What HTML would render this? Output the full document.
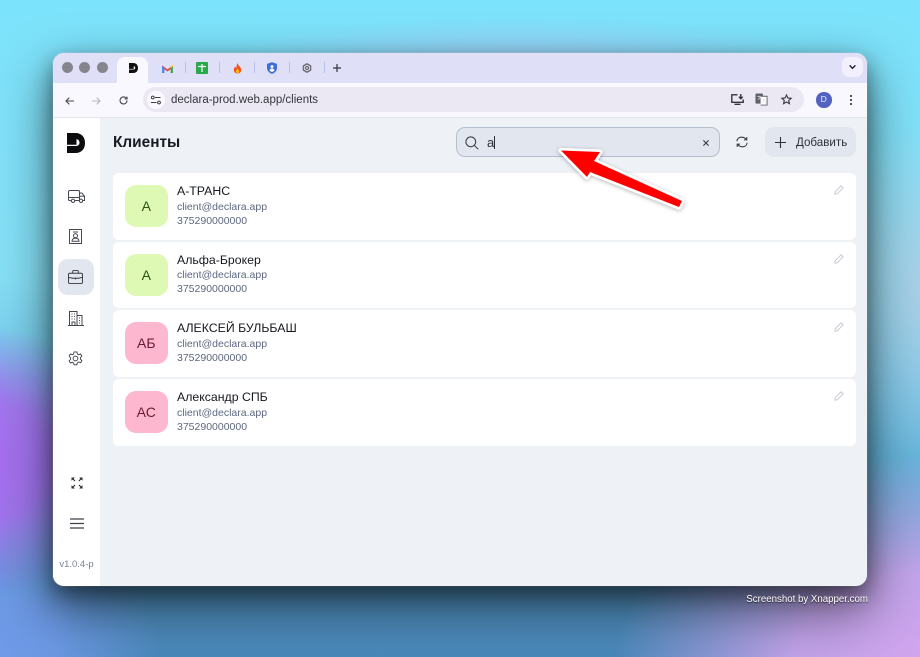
<!DOCTYPE html>
<html lang="ru"><head><meta charset="utf-8"><title>Клиенты</title>
<style>
*{box-sizing:border-box}
html,body{margin:0;padding:0}
body{width:920px;height:657px;overflow:hidden;position:relative;font-family:"Liberation Sans","Noto Sans CJK SC",sans-serif;
background:
radial-gradient(ellipse 300px 45px at 520px 62px,rgba(170,205,250,.75) 0%,rgba(170,205,250,0) 100%),
radial-gradient(ellipse 110px 170px at 930px 290px,rgba(180,205,228,.85) 0%,rgba(180,205,228,0) 100%),
radial-gradient(ellipse 140px 135px at -15px 460px,#a86df0 0%,rgba(168,109,240,.88) 45%,rgba(168,109,240,0) 100%),
radial-gradient(ellipse 320px 210px at 935px 665px,#d4a6f0 0%,rgba(212,166,240,.85) 45%,rgba(212,166,240,0) 100%),
radial-gradient(ellipse 170px 110px at -10px 640px,#6f9ae8 0%,rgba(111,154,232,.9) 40%,rgba(111,154,232,0) 100%),
linear-gradient(180deg,#7ce3fc 0%,#86e0f6 42%,#72c6e8 58%,#4a88bb 100%);}
.abs{position:absolute}
.win{position:absolute;left:53px;top:53px;width:814px;height:533px;border-radius:11px;overflow:hidden;background:#eef1f6;box-shadow:0 8px 20px rgba(0,0,0,.42),0 22px 50px 4px rgba(0,0,0,.5),0 0 0 1px rgba(255,255,255,.22)}
.strip{position:absolute;left:0;top:0;width:814px;height:30px;background:#e0dff8}
.dot{position:absolute;top:9px;width:11px;height:11px;border-radius:50%;background:#85858d}
.tab{position:absolute;left:64px;top:4px;width:31px;height:26px;background:#faf8ff;border-radius:8px 8px 0 0}
.sep{position:absolute;top:9px;width:1px;height:11px;background:#b9c2ee}
.bar{position:absolute;left:0;top:30px;width:814px;height:35px;background:#faf8ff;border-bottom:1px solid #e4e3ea}
.url{position:absolute;left:90px;top:4px;width:661px;height:25px;border-radius:13px;background:#ece8f3}
.urltxt{position:absolute;left:28px;top:6px;font-size:11.5px;color:#33363d;line-height:14px}
.side{position:absolute;left:0;top:65px;width:47px;height:468px;background:#fff}
.active{position:absolute;left:5px;top:141px;width:36px;height:36px;border-radius:10px;background:#e2e6ee}
.ver{position:absolute;left:0;width:47px;text-align:center;font-size:9.5px;color:#7a8290;line-height:12px}
.h1{position:absolute;left:60px;top:80px;font-size:15.4px;font-weight:700;color:#181c25;line-height:19px}
.search{position:absolute;left:403px;top:74px;width:264px;height:30px;border:1px solid #b6c0cc;border-radius:9px;background:#e2e6ee}
.search .v{position:absolute;left:30px;top:7px;font-size:13px;color:#2a2f38;line-height:15px}
.caret{position:absolute;left:37px;top:8px;width:1px;height:13px;background:#2a2f38}
.add{position:absolute;left:712px;top:74px;width:91px;height:30px;border-radius:9px;background:#e2e6ee;font-size:11.6px;color:#2c313a}
.add span{position:absolute;left:31px;top:8.500px;line-height:14px}
.card{position:absolute;left:60px;width:743px;height:66.5px;background:#fff;border-radius:6px}
.av{position:absolute;left:12px;top:12px;width:42.5px;height:42px;border-radius:11px;display:flex;align-items:center;justify-content:center;font-size:14px;line-height:1}
.g{background:#def9b4;color:#2f5213}
.p{background:#fdb8cf;color:#6a1b30}
.n{position:absolute;left:64px;top:10px;font-size:12.3px;color:#15181f;line-height:16px;white-space:nowrap}
.m{position:absolute;left:64px;font-size:10.5px;color:#5d6880;line-height:13px;white-space:nowrap}
.m1{top:27.500px}.m2{top:41.500px}
.pen{position:absolute;left:721px;top:12px}
.wm{position:absolute;right:52px;top:594px;font-size:9.7px;color:#fff;line-height:12px;text-shadow:0 1px 1px rgba(0,0,0,.7)}
svg{display:block;position:absolute;overflow:visible}
</style></head><body>
<div class="win">
  <div class="strip">
    <div class="dot" style="left:9px"></div><div class="dot" style="left:26px"></div><div class="dot" style="left:44px"></div>
    <div class="tab"></div>
    <svg style="left:76px;top:10px" width="9" height="10" viewBox="0 0 18 20"><path fill="#111" d="M0 0H8.500C14.500 0 18 4 18 10S14.500 20 8.500 20H0V13H8.500C10.800 13 12.500 11.800 12.500 9.700 12.500 7.500 11 6.300 9.500 6.300V11.800H0z"/></svg>
    <svg style="left:109px;top:11px" width="11" height="9" viewBox="0 0 12 10"><path fill="#e8453c" d="M0 1.500 6 6l6-4.500V4L6 8.300 0 4z"/><path fill="#4285f4" d="M0 2v8h2.500V4z"/><path fill="#34a853" d="M12 2v8H9.500V4z"/><path fill="#f9bb2d" d="M9.500 3 12 1v2L9.500 5z"/></svg>
    <svg style="left:143px;top:9px" width="12" height="12" viewBox="0 0 12 12"><rect width="12" height="12" rx="1" fill="#2ba84a"/><path d="M2 4.500h8M6 2v8" stroke="#fff" stroke-width="1.200"/></svg>
    <svg style="left:180px;top:10px" width="9" height="11" viewBox="0 0 11 13"><path fill="#f4511e" d="M5.500 0C6 3 10 4.500 10 8.200c0 2.700-2 4.500-4.500 4.500S1 10.900 1 8.200C1 6.300 2 5 3 4c.2 1 .6 1.500 1.200 1.800C4.400 4 4.500 2 5.500 0z"/><path fill="#fbbc04" d="M5.500 6.500c.6 1.300 2 2 2 3.700 0 1.300-1 2.400-2 2.400s-2-1.100-2-2.400c0-1.700 1.500-2.400 2-3.700z"/></svg>
    <svg style="left:214px;top:9px" width="10" height="12" viewBox="0 0 11 13"><path fill="#3f6fd8" d="M5.500 0 11 2v4.500c0 3-2.300 5.400-5.500 6.500C2.300 11.900 0 9.500 0 6.500V2z"/><circle cx="5.500" cy="5" r="1.600" fill="#fff"/><path fill="#fff" d="M2.800 9.200c.4-1.500 1.500-2.200 2.700-2.200s2.300.7 2.700 2.200c-.8.800-1.700 1.300-2.700 1.600-1-.3-1.900-.8-2.700-1.600z"/></svg>
    <svg style="left:249px;top:10px" width="10" height="10" viewBox="0 0 12 12"><path fill="none" stroke="#6c6c74" stroke-width="1.700" d="M6 1l4.300 2.500v5L6 11 1.700 8.500v-5z"/><circle cx="6" cy="6" r="1.800" fill="none" stroke="#6c6c74" stroke-width="1.400"/></svg>
    <div class="sep" style="left:132px"></div><div class="sep" style="left:166px"></div><div class="sep" style="left:201px"></div><div class="sep" style="left:236px"></div><div class="sep" style="left:271px"></div>
    <svg style="left:280px;top:11px" width="8" height="8" viewBox="0 0 8 8"><path d="M4 0v8M0 4h8" stroke="#33353b" stroke-width="1.200" fill="none"/></svg>
    <div class="abs" style="left:789px;top:4px;width:21px;height:20px;border-radius:7px;background:#f2f0fc"></div>
    <svg style="left:796px;top:12px" width="7" height="4" viewBox="0 0 7 4"><path d="M.6.4 3.500 3.300 6.400.4" stroke="#22242a" stroke-width="1.400" fill="none"/></svg>
  </div>
  <div class="bar">
    <svg style="left:12px;top:14px" width="9" height="8" viewBox="0 0 9 8"><path d="M9 4H1M4.300.6 1 4l3.300 3.400" stroke="#45474d" stroke-width="1.100" fill="none"/></svg>
    <svg style="left:39px;top:14px" width="9" height="8" viewBox="0 0 9 8"><path d="M0 4h8M4.700.6 8 4 4.700 7.400" stroke="#b5b4bc" stroke-width="1.100" fill="none"/></svg>
    <svg style="left:66px;top:13px" width="9" height="9" viewBox="0 0 9 9"><path d="M8 4.500a3.500 3.500 0 1 1-1-2.500L8 3M8 .6V3H5.600" stroke="#45474d" stroke-width="1.100" fill="none"/></svg>
    <div class="url">
      <div class="abs" style="left:4px;top:4px;width:18px;height:18px;border-radius:50%;background:#fbf9ff"></div>
      <svg style="left:7px;top:8px" width="12" height="10" viewBox="0 0 12 10"><circle cx="2.800" cy="2.500" r="1.400" fill="none" stroke="#3f4147"/><path d="M5 2.500h5.500M1 7.500h5.500" stroke="#3f4147" fill="none"/><circle cx="9" cy="7.500" r="1.400" fill="none" stroke="#3f4147"/></svg>
      <div class="urltxt">declara-prod.web.app/clients</div>
      <svg style="left:588px;top:7px" width="13" height="11" viewBox="0 0 13 11"><path d="M6.500.8H.8v7.500h11.400V5.500M3.500 10.300h6" stroke="#34363c" stroke-width="1.400" fill="none"/><path d="M9.800 0v4.500M7.900 2.800l1.900 1.900 1.900-1.900" stroke="#34363c" stroke-width="1.400" fill="none"/></svg>
      <svg style="left:612px;top:6px" width="13" height="13" viewBox="0 0 14 14"><rect x="0.500" y="0.500" width="8" height="11" rx="1" fill="#5f6168"/><path d="M6 3.500h7v9.500H6" fill="#fff" stroke="#5f6168"/><path d="M2.500 4h4M4.500 3v1M3 7c1.500-.5 2.500-1.500 3-3M8 10.500l1.800-4 1.800 4" stroke="#ddd" stroke-width=".8" fill="none"/></svg>
      <svg style="left:638px;top:7px" width="11" height="11" viewBox="0 0 12 12"><path d="M6 1l1.500 3.300 3.600.4-2.700 2.400.8 3.500L6 8.800l-3.200 1.800.8-3.500L.9 4.700l3.600-.4z" stroke="#34363c" stroke-width="1.200" fill="none"/></svg>
    </div>
    <div class="abs" style="left:763px;top:9px;width:15.500px;height:15.500px;border-radius:50%;background:#5463bf;color:#e9ecff;font-size:8.500px;line-height:15.500px;text-align:center">D</div>
    <svg style="left:796px;top:11px" width="4" height="12" viewBox="0 0 4 12"><circle cx="2" cy="2" r="1.100" fill="#45474d"/><circle cx="2" cy="6" r="1.100" fill="#45474d"/><circle cx="2" cy="10" r="1.100" fill="#45474d"/></svg>
  </div>
  <div class="side">
    <svg style="left:14px;top:15px" width="18" height="20" viewBox="0 0 18 20"><path fill="#0c0c0e" d="M0 0H8.500C14.500 0 18 4 18 10S14.500 20 8.500 20H0V13H8.500C10.800 13 12.500 11.800 12.500 9.700 12.500 7.500 11 6.300 9.500 6.300V11.800H0z"/></svg>
    <svg style="left:15px;top:72px" width="17" height="13" viewBox="0 0 17 13"><path d="M3 10.500H1.500a1 1 0 0 1-1-1V1.500a1 1 0 0 1 1-1h9a1 1 0 0 1 1 1v9M7 10.500h4.500M11.500 3h2.300l2.700 3.200v4.300H15M.5 7.500h11M11.500 6.300h5" stroke="#454952" fill="none"/><circle cx="5" cy="10.800" r="1.700" stroke="#454952" fill="none"/><circle cx="13" cy="10.800" r="1.700" stroke="#454952" fill="none"/></svg>
    <svg style="left:16px;top:111px" width="13" height="15" viewBox="0 0 13 15"><rect x="0.500" y="0.500" width="12" height="14" stroke="#454952" fill="none"/><path d="M4 3h5" stroke="#454952" fill="none"/><circle cx="6.500" cy="6.800" r="2" stroke="#454952" fill="none"/><path d="M3 12.200c0-2 1.500-3 3.500-3s3.500 1 3.500 3z" stroke="#454952" fill="none"/></svg>
    <div class="active"></div>
    <svg style="left:15px;top:152px" width="15" height="14" viewBox="0 0 16 15"><rect x="0.500" y="3.500" width="15" height="11" rx="1.500" stroke="#33373f" fill="none"/><path d="M5 3.500V1.800c0-.7.500-1.300 1.200-1.300h3.600c.7 0 1.200.6 1.200 1.300v1.700M.5 8c5 1.300 10 1.300 15 0M8 8v2" stroke="#33373f" fill="none"/></svg>
    <svg style="left:15px;top:193px" width="16" height="15" viewBox="0 0 16 15"><path d="M1.500 14.500V.5h7.500v14M9 4.500h5v10M0 14.500h16M3.500 3h1M6 3h1M3.500 5.500h1M6 5.500h1M3.500 8h1M6 8h1M4 14V11h3v3M11 7h1M11 9.500h1M11 12h1" stroke="#454952" fill="none"/></svg>
    <svg style="left:15px;top:233px" width="15" height="15" viewBox="0 0 24 24"><path d="M12 1.500l2.300 0 .7 3.200 2.200 1.200 3-1.100 2 3.500-2.400 2.200v2.500l2.400 2.200-2 3.500-3-1.100-2.200 1.200-.7 3.200H9.700L9 19.300l-2.200-1.200-3 1.100-2-3.500 2.400-2.200v-2.500L1.800 8.300l2-3.500 3 1.100L9 4.700l.7-3.200z" stroke="#454952" stroke-width="1.500" fill="none"/><circle cx="12" cy="12" r="3.800" stroke="#454952" stroke-width="1.500" fill="none"/></svg>
    <svg style="left:18px;top:359px" width="12" height="12" viewBox="0 0 12 12"><path d="M1 1l3 3M7.800 4l3-3M1 11l3-3M11 11 8 8" stroke="#23262c" stroke-width="1.100" fill="none"/><path d="M.5.500h3.300L.5 3.800zM11.500.500H8.200l3.300 3.300zM.5 11.500h3.300L.5 8.200zM11.500 11.500H8.200l3.300-3.300z" fill="#23262c"/></svg>
    <svg style="left:16.500px;top:400px" width="14" height="11" viewBox="0 0 14 11"><path d="M0 1h14M0 5.500h14M0 10h14" stroke="#3d4149" stroke-width="1.200" fill="none"/></svg>
    <div class="ver" style="top:441px">v1.0.4-p</div>
  </div>
  <div class="h1">Клиенты</div>
  <div class="search">
    <svg style="left:8px;top:8px" width="14" height="14" viewBox="0 0 14 14"><circle cx="5.800" cy="5.800" r="4.900" stroke="#343840" stroke-width="1" fill="none"/><path d="M9.300 9.300l4 4" stroke="#343840" stroke-width="1"/></svg>
    <div class="v">a</div><div class="caret"></div>
    <svg style="left:246px;top:12px" width="6" height="6" viewBox="0 0 6 6"><path d="M.4.400l5.200 5.200M5.600.4.4 5.600" stroke="#343840" stroke-width="1.100"/></svg>
  </div>
  <svg style="left:683px;top:83px" width="12" height="12" viewBox="0 0 14 14"><path d="M1 6c.3-2.800 2.500-4.600 5.500-4.600 2.300 0 4 .8 5.800 2.800M12.600 1.200v3.300H9.300M13 8c-.3 2.800-2.500 4.600-5.500 4.600-2.300 0-4-.8-5.800-2.800M1.400 12.800V9.500h3.300" stroke="#343840" stroke-width="1.200" fill="none"/></svg>
  <div class="add">
    <svg style="left:10px;top:10px" width="11" height="11" viewBox="0 0 11 11"><path d="M5.500 0v11M0 5.500h11" stroke="#2c313a" stroke-width="1.100"/></svg>
    <span>Добавить</span>
  </div>
  <div class="card" style="top:120px"><div class="av g">А</div><div class="n">А-ТРАНС</div><div class="m m1">client@declara.app</div><div class="m m2">375290000000</div>
    <svg class="pen" width="10" height="10" viewBox="0 0 12 12"><path d="M8.500 1 11 3.500 4 10.500 1 11l.5-3z" stroke="#c2c6ce" stroke-width="1.100" fill="none"/></svg></div>
  <div class="card" style="top:188.700px"><div class="av g">А</div><div class="n">Альфа-Брокер</div><div class="m m1">client@declara.app</div><div class="m m2">375290000000</div>
    <svg class="pen" width="10" height="10" viewBox="0 0 12 12"><path d="M8.500 1 11 3.500 4 10.500 1 11l.5-3z" stroke="#c2c6ce" stroke-width="1.100" fill="none"/></svg></div>
  <div class="card" style="top:257.400px"><div class="av p">АБ</div><div class="n">АЛЕКСЕЙ БУЛЬБАШ</div><div class="m m1">client@declara.app</div><div class="m m2">375290000000</div>
    <svg class="pen" width="10" height="10" viewBox="0 0 12 12"><path d="M8.500 1 11 3.500 4 10.500 1 11l.5-3z" stroke="#c2c6ce" stroke-width="1.100" fill="none"/></svg></div>
  <div class="card" style="top:326px"><div class="av p">АС</div><div class="n">Александр СПБ</div><div class="m m1">client@declara.app</div><div class="m m2">375290000000</div>
    <svg class="pen" width="10" height="10" viewBox="0 0 12 12"><path d="M8.500 1 11 3.500 4 10.500 1 11l.5-3z" stroke="#c2c6ce" stroke-width="1.100" fill="none"/></svg></div>
</div>
<svg style="left:0;top:0" width="920" height="657" viewBox="0 0 920 657">
  <defs><filter id="s" x="-20%" y="-20%" width="140%" height="140%"><feDropShadow dx="0" dy="1" stdDeviation="2" flood-color="#000" flood-opacity=".3"/></filter></defs>
  <path d="M561 150.500 600 152 594 161 682 201 679 207 590 172 587 177z" fill="#fe0000" stroke="#fff" stroke-width="5" stroke-linejoin="round" filter="url(#s)"/>
  <path d="M561 150.500 600 152 594 161 682 201 679 207 590 172 587 177z" fill="#fe0000"/>
</svg>
<div class="wm">Screenshot by Xnapper.com</div>
</body></html>
